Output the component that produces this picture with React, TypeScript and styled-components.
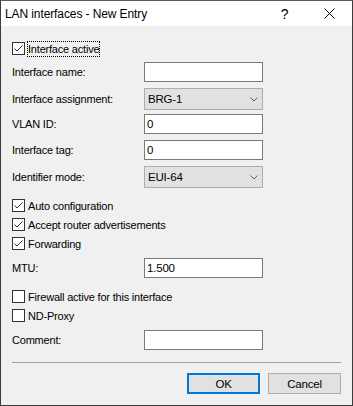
import React from 'react'
import styled, { createGlobalStyle } from 'styled-components'

const GlobalStyle = createGlobalStyle`
  html, body {
    margin: 0;
    padding: 0;
    background: #f0f0f0;
  }
`

const Window = styled.div`
  width: 353px;
  height: 406px;
  box-sizing: border-box;
  border: 1px solid #3c3c3c;
  border-top-color: #5a5a5a;
  background: #f0f0f0;
  display: flex;
  flex-direction: column;
  font-family: 'Liberation Sans', Arial, sans-serif;
  font-size: 11px;
  letter-spacing: -0.2px;
  color: #000;
  user-select: none;
`

const TitleBar = styled.div`
  height: 25px;
  background: #fff;
  display: flex;
  align-items: center;
`

const TitleText = styled.div`
  flex: 1;
  padding-left: 4px;
  font-size: 12px;
  letter-spacing: -0.1px;
  color: #000;
`

const TitleButton = styled.div<{ $w: number }>`
  width: ${({ $w }) => $w}px;
  height: 25px;
  display: flex;
  align-items: center;
  justify-content: center;
  font-size: 14px;
  color: #000;
`

const Body = styled.div`
  flex: 1;
  display: flex;
  flex-direction: column;
  padding: 13px 11px 11px 11px;
`

const CheckRow = styled.label<{ $mt?: number }>`
  height: 19px;
  display: flex;
  align-items: center;
  margin-top: ${({ $mt }) => $mt ?? 0}px;
`

const Box = styled.span`
  width: 13px;
  height: 13px;
  box-sizing: border-box;
  border: 1px solid #333;
  background: #fff;
  display: flex;
  flex-shrink: 0;
`

const CheckText = styled.span<{ $focus?: boolean }>`
  margin-left: 2px;
  padding: 1px 1px 1px 1px;
  line-height: 14px;
  outline: ${({ $focus }) => ($focus ? '1px dotted #000' : 'none')};
  outline-offset: -1px;
`

const FieldRow = styled.div<{ $mt?: number }>`
  height: 26px;
  display: flex;
  align-items: flex-start;
  margin-top: ${({ $mt }) => $mt ?? 0}px;
`

const Label = styled.div<{ $h: number }>`
  width: 132px;
  flex-shrink: 0;
  line-height: ${({ $h }) => $h}px;
`

const TextInput = styled.div`
  width: 119px;
  height: 20px;
  box-sizing: border-box;
  border: 1px solid #7a7a7a;
  background: #fff;
  padding-left: 2px;
  line-height: 18px;
  font-size: 11.5px;
`

const Select = styled.div`
  width: 119px;
  height: 22px;
  box-sizing: border-box;
  border: 1px solid #adadad;
  background: #e1e1e1;
  padding: 0 4px 0 3px;
  display: flex;
  align-items: center;
  justify-content: space-between;
  font-size: 11.5px;
`

const Separator = styled.div`
  height: 1px;
  background: #a0a0a0;
  margin-top: 6px;
`

const ButtonBar = styled.div`
  display: flex;
  justify-content: flex-end;
  gap: 8px;
  margin-top: 10px;
`

const Button = styled.div<{ $default?: boolean }>`
  width: 73px;
  height: 21px;
  box-sizing: border-box;
  background: #e1e1e1;
  border: ${({ $default }) => ($default ? '2px solid #0078d7' : '1px solid #adadad')};
  display: flex;
  align-items: center;
  justify-content: center;
  font-size: 11.5px;
`

const CheckMark = () => (
  <svg width="11" height="11" viewBox="0 0 11 11">
    <path d="M1.5 5.5 L4 8 L9.5 2.5" fill="none" stroke="#333" strokeWidth="1" />
  </svg>
)

const Chevron = () => (
  <svg width="8" height="5" viewBox="0 0 8 5">
    <path d="M0.5 0.5 L4 4 L7.5 0.5" fill="none" stroke="#606060" strokeWidth="1" />
  </svg>
)

const Check: React.FC<{ checked?: boolean; focus?: boolean; mt?: number; children: React.ReactNode }> = ({
  checked,
  focus,
  mt,
  children,
}) => (
  <CheckRow $mt={mt}>
    <Box>{checked && <CheckMark />}</Box>
    <CheckText $focus={focus}>{children}</CheckText>
  </CheckRow>
)

const InputRow: React.FC<{ label: string; value?: string; mt?: number }> = ({ label, value, mt }) => (
  <FieldRow $mt={mt}>
    <Label $h={20}>{label}</Label>
    <TextInput>{value}</TextInput>
  </FieldRow>
)

const SelectRow: React.FC<{ label: string; value: string }> = ({ label, value }) => (
  <FieldRow>
    <Label $h={22}>{label}</Label>
    <Select>
      <span>{value}</span>
      <Chevron />
    </Select>
  </FieldRow>
)

const App: React.FC = () => {
  return (
    <>
      <GlobalStyle />
      <Window>
        <TitleBar>
          <TitleText>LAN interfaces - New Entry</TitleText>
          <TitleButton $w={45}>?</TitleButton>
          <TitleButton $w={45}>
            <svg width="11" height="11" viewBox="0 0 11 11">
              <path d="M0.5 0.5 L10.5 10.5 M10.5 0.5 L0.5 10.5" stroke="#000" strokeWidth="1" />
            </svg>
          </TitleButton>
        </TitleBar>
        <Body>
          <Check checked focus>
            Interface active
          </Check>
          <InputRow label="Interface name:" mt={4} />
          <SelectRow label="Interface assignment:" value="BRG-1" />
          <InputRow label="VLAN ID:" value="0" />
          <InputRow label="Interface tag:" value="0" />
          <SelectRow label="Identifier mode:" value="EUI-64" />
          <Check checked mt={4}>
            Auto configuration
          </Check>
          <Check checked>Accept router advertisements</Check>
          <Check checked>Forwarding</Check>
          <InputRow label="MTU:" value="1.500" mt={5} />
          <Check mt={3}>Firewall active for this interface</Check>
          <Check>ND-Proxy</Check>
          <InputRow label="Comment:" mt={5} />
          <Separator />
          <ButtonBar>
            <Button $default>OK</Button>
            <Button>Cancel</Button>
          </ButtonBar>
        </Body>
      </Window>
    </>
  )
}

export default App
